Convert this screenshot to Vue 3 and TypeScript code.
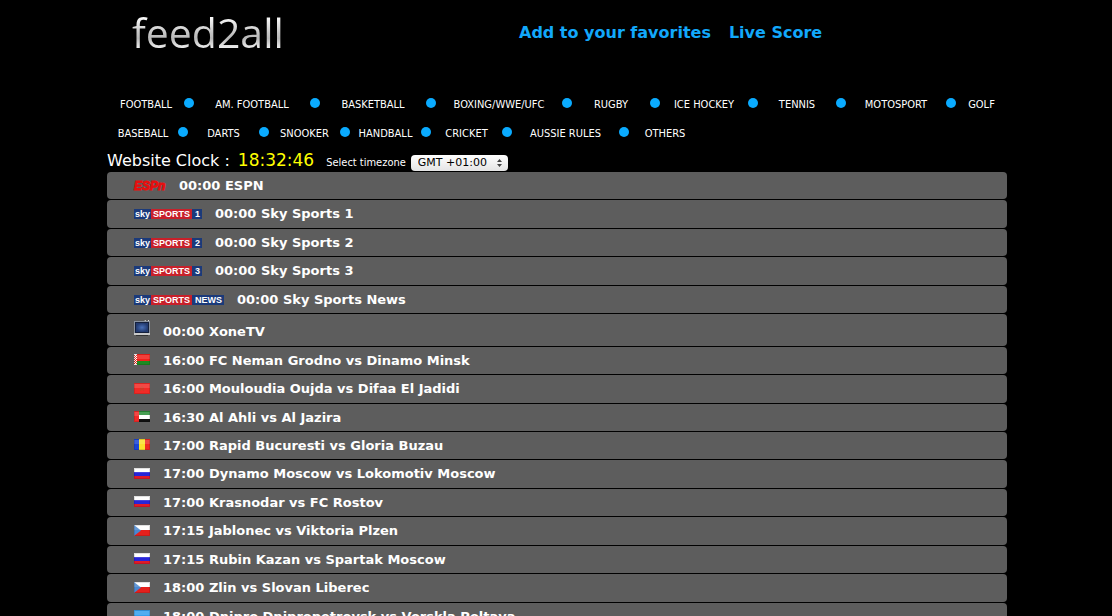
<script setup lang="ts">
import { ref } from 'vue'

interface NavItem { label: string; width: number }
interface Feed { icon: string; time: string; title: string; mark?: string }

const navRows: NavItem[][] = [
  [
    { label: 'FOOTBALL', width: 76 },
    { label: 'AM. FOOTBALL', width: 116 },
    { label: 'BASKETBALL', width: 106 },
    { label: 'BOXING/WWE/UFC', width: 126 },
    { label: 'RUGBY', width: 78 },
    { label: 'ICE HOCKEY', width: 88 },
    { label: 'TENNIS', width: 78 },
    { label: 'MOTOSPORT', width: 100 },
    { label: 'GOLF', width: 51 },
  ],
  [
    { label: 'BASEBALL', width: 70 },
    { label: 'DARTS', width: 71 },
    { label: 'SNOOKER', width: 71 },
    { label: 'HANDBALL', width: 71 },
    { label: 'CRICKET', width: 71 },
    { label: 'AUSSIE RULES', width: 107 },
    { label: 'OTHERS', width: 72 },
  ],
]

const feeds: Feed[] = [
  { icon: 'espn', time: '00:00', title: 'ESPN' },
  { icon: 'sky', mark: '1', time: '00:00', title: 'Sky Sports 1' },
  { icon: 'sky', mark: '2', time: '00:00', title: 'Sky Sports 2' },
  { icon: 'sky', mark: '3', time: '00:00', title: 'Sky Sports 3' },
  { icon: 'sky', mark: 'NEWS', time: '00:00', title: 'Sky Sports News' },
  { icon: 'tv', time: '00:00', title: 'XoneTV' },
  { icon: 'by', time: '16:00', title: 'FC Neman Grodno vs Dinamo Minsk' },
  { icon: 'ma', time: '16:00', title: 'Mouloudia Oujda vs Difaa El Jadidi' },
  { icon: 'ae', time: '16:30', title: 'Al Ahli vs Al Jazira' },
  { icon: 'ro', time: '17:00', title: 'Rapid Bucuresti vs Gloria Buzau' },
  { icon: 'ru', time: '17:00', title: 'Dynamo Moscow vs Lokomotiv Moscow' },
  { icon: 'ru', time: '17:00', title: 'Krasnodar vs FC Rostov' },
  { icon: 'cz', time: '17:15', title: 'Jablonec vs Viktoria Plzen' },
  { icon: 'ru', time: '17:15', title: 'Rubin Kazan vs Spartak Moscow' },
  { icon: 'cz', time: '18:00', title: 'Zlin vs Slovan Liberec' },
  { icon: 'ua', time: '18:00', title: 'Dnipro Dnipropetrovsk vs Vorskla Poltava' },
]

const zones = ['GMT +00:00', 'GMT +01:00', 'GMT +02:00', 'GMT +03:00']
const zone = ref('GMT +01:00')
</script>

<template>
  <div class="page">
    <div class="wrap">
      <header class="top">
        <a href="#" class="logo">feed2all</a>
        <div class="toplinks">
          <a href="#">Add to your favorites</a>
          <a href="#">Live Score</a>
        </div>
      </header>

      <nav class="nav" aria-label="Sports">
        <ul v-for="(row, r) in navRows" :key="r">
          <li v-for="(item, i) in row" :key="item.label">
            <a href="#" :style="{ width: item.width + 'px' }">{{ item.label }}</a>
            <span v-if="i < row.length - 1" class="dot"></span>
          </li>
        </ul>
      </nav>

      <div class="clock">
        <span class="caption">Website Clock :</span>
        <time>18:32:46</time>
        <label for="zone">Select timezone</label>
        <span class="picker">
          <select id="zone" v-model="zone">
            <option v-for="z in zones" :key="z">{{ z }}</option>
          </select>
          <svg width="5" height="8" viewBox="0 0 5 8" aria-hidden="true">
            <path d="M2.5 0 5 3H0ZM2.5 8 0 5H5Z" fill="#444" />
          </svg>
        </span>
      </div>

      <ul class="feeds">
        <li v-for="(f, i) in feeds" :key="i" :class="{ tall: f.icon === 'tv' }">
          <a href="#">
            <span v-if="f.icon === 'espn'" class="espn">ESPn</span>
            <span v-else-if="f.icon === 'sky'" class="sky">
              <span class="brand">sky</span><span class="sports">SPORTS</span><span class="mark">{{ f.mark }}</span>
            </span>
            <svg v-else-if="f.icon === 'tv'" class="tv" width="16" height="16" viewBox="0 0 16 16" aria-hidden="true">
              <defs>
                <radialGradient id="screen"><stop offset="0" stop-color="#4a70b8" /><stop offset="1" stop-color="#223a70" /></radialGradient>
              </defs>
              <path d="M11 0l1 2M15 0l-2 2" stroke="#ddd" stroke-width="1" />
              <rect y="1" width="16" height="13" fill="#8b93a0" />
              <rect x="1" y="2" width="14" height="11" fill="#15203c" />
              <rect x="2" y="3" width="12" height="9" fill="url(#screen)" />
              <path d="M0 13h16v2H0z" fill="#c9c9c9" />
              <path d="M2 15h12v1H2z" fill="#333" />
            </svg>
            <svg v-else class="flag" width="16" height="11" viewBox="0 0 16 11" aria-hidden="true">
              <template v-if="f.icon === 'by'">
                <path d="M0 0h16v7H0z" fill="#f2201a" /><path d="M0 7h16v4H0z" fill="#1d8a22" />
                <path d="M0 0h3v11H0z" fill="#fff" />
                <path d="M0 1h1v1H0zM2 1h1v1H2zM1 2h1v1H1zM0 3h1v1H0zM2 3h1v1H2zM1 4h1v1H1zM0 5h1v1H0zM2 5h1v1H2zM1 6h1v1H1zM0 7h1v1H0zM2 7h1v1H2zM1 8h1v1H1zM0 9h1v1H0zM2 9h1v1H2z" fill="#e0201a" />
              </template>
              <template v-else-if="f.icon === 'ma'">
                <path d="M0 0h16v11H0z" fill="#f12a26" /><path d="M8 3l2 5-4-3h4L6 8z" fill="none" stroke="#c8402a" stroke-width=".6" />
              </template>
              <template v-else-if="f.icon === 'ae'">
                <path d="M0 0h16v4H0z" fill="#2a8e38" /><path d="M0 4h16v4H0z" fill="#fff" />
                <path d="M0 8h16v3H0z" fill="#111" /><path d="M0 0h5v11H0z" fill="#f02a28" />
              </template>
              <template v-else-if="f.icon === 'ro'">
                <path d="M0 0h5v11H0z" fill="#1b45d6" /><path d="M5 0h6v11H5z" fill="#fbe32c" /><path d="M11 0h5v11h-5z" fill="#ee2a22" />
              </template>
              <template v-else-if="f.icon === 'ru'">
                <path d="M0 0h16v4H0z" fill="#fff" /><path d="M0 4h16v4H0z" fill="#2725d8" /><path d="M0 8h16v3H0z" fill="#e01a28" />
              </template>
              <template v-else-if="f.icon === 'cz'">
                <path d="M0 0h16v6H0z" fill="#fff" /><path d="M0 5h16v6H0z" fill="#e5201c" /><path d="M0 0l7 5.500L0 11z" fill="#4b87cf" />
              </template>
              <template v-else>
                <path d="M0 0h16v6H0z" fill="#35a0ee" /><path d="M0 6h16v5H0z" fill="#fbdc2c" />
              </template>
              <path d="M0 1h16v4H0z" fill="#fff" opacity=".14" />
              <path d="M.5.5h15v10H.5z" fill="none" stroke="#000" opacity=".12" />
            </svg>
            <span class="title">{{ f.time }} {{ f.title }}</span>
          </a>
        </li>
      </ul>
    </div>
  </div>
</template>

<style>
html,
body {
  background: #000;
}
body {
  margin: 0;
  overflow: hidden;
}
</style>

<style scoped>
.page {
  padding-left: 2px;
  height: 100vh;
  overflow: hidden;
  background: #000;
  color: #fff;
  font-family: "DejaVu Sans", sans-serif;
}
a {
  color: inherit;
  text-decoration: none;
}
ul {
  list-style: none;
  margin: 0;
  padding: 0;
}
.wrap {
  max-width: 900px;
  margin: 0 auto;
}
.top {
  display: flex;
  align-items: center;
  height: 64px;
  padding: 0 0 27px 25px;
}
.logo {
  width: 387px;
  font: 500 41px/64px "Open Sans", sans-serif;
  color: transparent;
  background: linear-gradient(#fff 25%, #c4c4c4 52%, #b8b8b8 60%, #eee 75%);
  background-clip: text;
  -webkit-background-clip: text;
}
.toplinks {
  display: flex;
  gap: 18px;
  font-size: 16px;
  font-weight: bold;
  color: #12a8fb;
}
.nav ul {
  display: flex;
  height: 29px;
  padding-left: 1px;
}
.nav li {
  display: flex;
  align-items: center;
  height: 28px;
}
.nav a {
  font: 11px/28px "DejaVu Sans Condensed", "DejaVu Sans", sans-serif;
  text-align: center;
  white-space: nowrap;
}
.dot {
  width: 10px;
  height: 10px;
  margin-bottom: 4px;
  border-radius: 50%;
  background: #0aabff;
}
.clock {
  display: flex;
  align-items: baseline;
  height: 23px;
  font-size: 16px;
  line-height: 23px;
}
.clock time {
  margin: 0 12px 0 8px;
  font-size: 17px;
  color: #ff0;
}
.clock label {
  font: 11px/23px "DejaVu Sans Condensed", "DejaVu Sans", sans-serif;
}
.picker {
  position: relative;
  margin-left: 5px;
}
.picker select {
  appearance: none;
  width: 97px;
  height: 16px;
  padding: 0 7px;
  border: 0;
  border-radius: 4px;
  background: linear-gradient(#fff, #e4e4e4);
  font: 11px/16px "DejaVu Sans", sans-serif;
  color: #000;
}
.picker svg {
  position: absolute;
  right: 6px;
  top: 10px;
  pointer-events: none;
}
.feeds {
  display: flex;
  flex-direction: column;
  gap: 1px;
}
.feeds li {
  height: 27px;
  flex: none;
  border-radius: 4px;
  background: #5d5d5d;
}
.feeds li:nth-child(even) {
  height: 28px;
}
.feeds li:nth-child(n + 10):nth-child(even) {
  height: 27px;
}
.feeds li:nth-child(n + 10):nth-child(odd) {
  height: 28px;
}
.feeds li.tall {
  height: 32px;
}
.feeds a {
  display: flex;
  align-items: center;
  gap: 13px;
  height: 100%;
  padding-left: 27px;
}
.title {
  font-size: 13px;
  font-weight: bold;
  line-height: 20px;
}
.tall .title {
  padding-top: 3px;
}
.tv {
  margin-bottom: 4px;
}
.flag {
  margin-bottom: 2px;
}
.espn {
  width: 32px;
  font: italic bold 12px/12px "Liberation Sans", sans-serif;
  color: #e60f0f;
  -webkit-text-stroke: 1px #e60f0f;
}
.sky {
  display: flex;
  font: bold 9px/10px "Liberation Sans", sans-serif;
  background: #1b3a7a;
}
.sky .brand {
  width: 17px;
  text-align: center;
}
.sky .sports {
  width: 41px;
  text-align: center;
  background: #c8202a;
}
.sky .mark {
  padding: 0 2px 0 3px;
}
</style>
